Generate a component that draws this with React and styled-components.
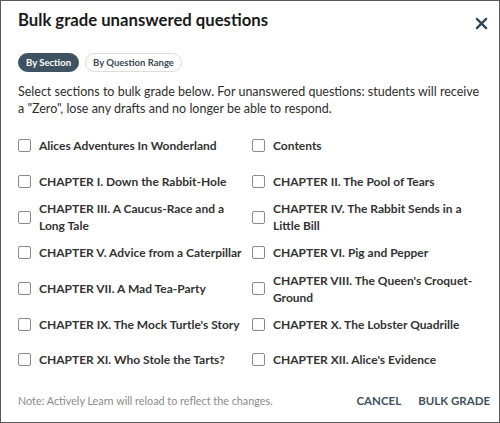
import React, { useState } from 'react'
import styled, { createGlobalStyle } from 'styled-components'

const GlobalStyle = createGlobalStyle`
    html, body {
        margin: 0;
        padding: 0;
        background: #ffffff;
    }
    * {
        box-sizing: border-box;
    }
`

const sections = [
    'Alices Adventures In Wonderland',
    'Contents',
    'CHAPTER I. Down the Rabbit-Hole',
    'CHAPTER II. The Pool of Tears',
    'CHAPTER III. A Caucus-Race and a Long Tale',
    'CHAPTER IV. The Rabbit Sends in a Little Bill',
    'CHAPTER V. Advice from a Caterpillar',
    'CHAPTER VI. Pig and Pepper',
    'CHAPTER VII. A Mad Tea-Party',
    "CHAPTER VIII. The Queen's Croquet-Ground",
    "CHAPTER IX. The Mock Turtle's Story",
    'CHAPTER X. The Lobster Quadrille',
    'CHAPTER XI. Who Stole the Tarts?',
    "CHAPTER XII. Alice's Evidence",
]

function App() {
    const [mode, setMode] = useState('section')
    const [checked, setChecked] = useState({})

    return (
        <>
            <GlobalStyle />
            <Dialog>
                <Header>
                    <Title>Bulk grade unanswered questions</Title>
                    <Close aria-label="Close">
                        <svg width="13" height="13" viewBox="0 0 14 14">
                            <path d="M2 2 L12 12 M12 2 L2 12" stroke="#2f4553" strokeWidth="2.4" strokeLinecap="round" />
                        </svg>
                    </Close>
                </Header>
                <Pills>
                    <Pill active={mode === 'section'} onClick={() => setMode('section')}>By Section</Pill>
                    <Pill active={mode === 'range'} onClick={() => setMode('range')}>By Question Range</Pill>
                </Pills>
                <Description>
                    Select sections to bulk grade below. For unanswered questions: students will receive
                    a "Zero", lose any drafts and no longer be able to respond.
                </Description>
                <Grid>
                    {sections.map((s) => (
                        <Row key={s}>
                            <Box
                                type="checkbox"
                                checked={!!checked[s]}
                                onChange={() => setChecked({ ...checked, [s]: !checked[s] })}
                            />
                            <Label>{s}</Label>
                        </Row>
                    ))}
                </Grid>
                <Footer>
                    <Note>Note: Actively Learn will reload to reflect the changes.</Note>
                    <Actions>
                        <TextButton>CANCEL</TextButton>
                        <TextButton>BULK GRADE</TextButton>
                    </Actions>
                </Footer>
            </Dialog>
        </>
    )
}

export default App

const Dialog = styled.div`
    width: 500px;
    height: 423px;
    border: 1px solid #5a5a5a;
    padding: 9px 10px 0 17px;
    font-family: Lato, "Open Sans", sans-serif;
    color: #2b2b2b;
    display: flex;
    flex-direction: column;
    background: #fff;
`

const Header = styled.div`
    display: flex;
    justify-content: space-between;
    align-items: flex-start;
`

const Title = styled.h1`
    margin: 0;
    font-size: 16.7px;
    line-height: 20px;
    font-weight: 700;
    color: #1a1a1a;
`

const Close = styled.button`
    border: none;
    background: none;
    padding: 0;
    margin: 5px 0 0 0;
    width: 16px;
    height: 16px;
    display: flex;
    align-items: center;
    justify-content: center;
    cursor: pointer;
`

const Pills = styled.div`
    display: flex;
    gap: 6px;
    margin-top: 22px;
`

const Pill = styled.button`
    height: 19px;
    padding: 0 7px;
    border-radius: 10px;
    font-family: inherit;
    font-size: 9.5px;
    font-weight: 700;
    border: 1px solid ${(p) => (p.active ? '#3e5261' : '#dcdcdc')};
    background: ${(p) => (p.active ? '#3e5261' : '#ffffff')};
    color: ${(p) => (p.active ? '#ffffff' : '#3a4a56')};
    cursor: pointer;
`

const Description = styled.p`
    margin: 11px 0 0 0;
    font-size: 12.5px;
    line-height: 17px;
    color: #2e2e2e;
    padding-right: 6px;
`

const Grid = styled.div`
    display: grid;
    grid-template-columns: 234px 1fr;
    grid-auto-rows: 35.7px;
    margin-top: 11px;
`

const Row = styled.label`
    display: flex;
    align-items: center;
    gap: 8px;
    cursor: pointer;
`

const Box = styled.input`
    appearance: none;
    margin: 0;
    width: 13px;
    height: 13px;
    flex: none;
    border: 1.5px solid #8a8a8a;
    border-radius: 2px;
    background: #fff;
    &:checked {
        background: #3e5261;
        border-color: #3e5261;
    }
`

const Label = styled.span`
    font-size: 12px;
    line-height: 17px;
    font-weight: 700;
    color: #333333;
    padding-right: 8px;
`

const Footer = styled.div`
    display: flex;
    justify-content: space-between;
    align-items: center;
    margin-top: auto;
    height: 42px;
    padding-bottom: 2px;
`

const Note = styled.span`
    font-size: 10.8px;
    color: #8a8a8a;
`

const Actions = styled.div`
    display: flex;
    gap: 17px;
    margin-right: -1px;
`

const TextButton = styled.button`
    border: none;
    background: none;
    padding: 0;
    font-family: inherit;
    font-size: 11.5px;
    font-weight: 700;
    color: #3e5261;
    cursor: pointer;
`
